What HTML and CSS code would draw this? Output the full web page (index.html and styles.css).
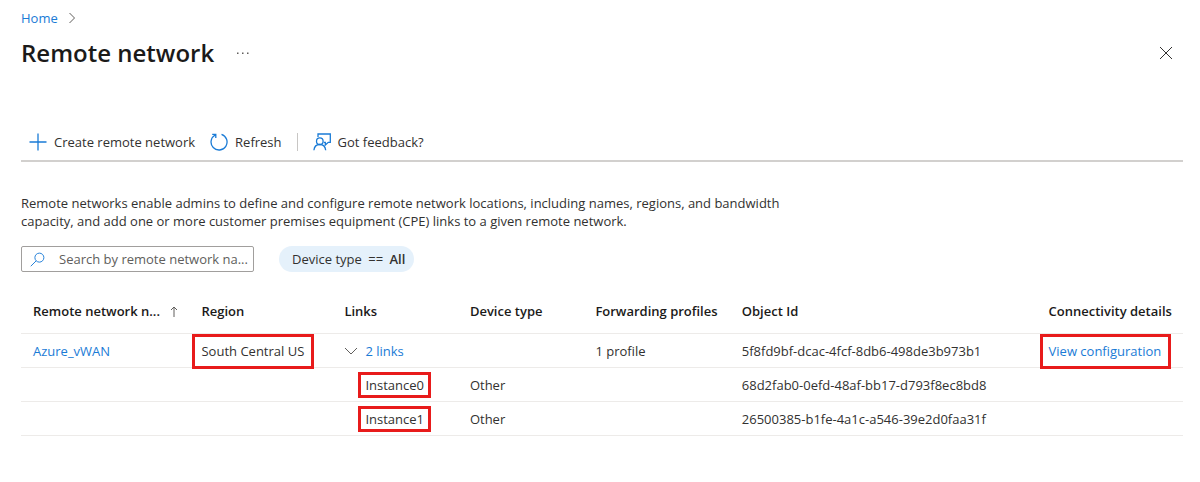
FILE: index.html
```html
<!DOCTYPE html>
<html lang="en">
<head>
<meta charset="utf-8">
<title>Remote network</title>
<link rel="stylesheet" href="styles.css">
</head>
<body>
<main class="page">
  <nav class="breadcrumb" aria-label="Breadcrumb">
    <a href="#">Home</a>
    <svg class="crumb-icon" viewBox="0 0 8 12" aria-hidden="true"><path d="M1.5 1 6.5 6l-5 5"/></svg>
  </nav>
  <header class="title-bar">
    <h1>Remote network</h1>
    <button class="icon-button more" type="button" aria-label="More">
      <svg viewBox="0 0 14 4" aria-hidden="true"><path d="M1 1.500h1.500v1.500H1zM6 1.500h1.500v1.500H6zM11 1.500h1.500v1.500H11z"/></svg>
    </button>
    <button class="icon-button close" type="button" aria-label="Close">
      <svg viewBox="0 0 14 14" aria-hidden="true"><path d="m1 1 12 12M13 1 1 13"/></svg>
    </button>
  </header>
  <div class="toolbar" role="toolbar">
    <button class="command" type="button">
      <svg viewBox="0 0 18 18" aria-hidden="true"><path d="M9 .5v17M.5 9h17"/></svg>
      Create remote network
    </button>
    <button class="command" type="button">
      <svg viewBox="0 0 18 18" aria-hidden="true"><path d="M11.500 1.400A8 8 0 1 1 5.200 2M2.200 1.300h3.600v3.600"/></svg>
      Refresh
    </button>
    <span class="divider"></span>
    <button class="command" type="button">
      <svg viewBox="0 0 18 18" aria-hidden="true"><path d="M5 4V1h12.300v8.300h-2L12.300 12V9.300h-1.500"/><circle cx="6.800" cy="8.200" r="3.300"/><path d="M.9 17.300c.4-3.600 2.600-5.800 5.900-5.800s5.500 2.200 5.900 5.800"/></svg>
      Got feedback?
    </button>
  </div>
  <p class="description">Remote networks enable admins to define and configure remote network locations, including names, regions, and bandwidth capacity, and add one or more customer premises equipment (CPE) links to a given remote network.</p>
  <div class="filters">
    <label class="search">
      <svg viewBox="0 0 16 16" aria-hidden="true"><circle cx="10" cy="6" r="4.800"/><path d="M6.500 9.500.8 15.200"/></svg>
      <input type="text" aria-label="Search by remote network name" placeholder="Search by remote network na...">
    </label>
    <button class="pill" type="button">Device type <span class="operator">==</span> <strong>All</strong></button>
  </div>
  <table class="networks">
    <colgroup>
      <col class="col-name"><col class="col-region"><col class="col-links"><col class="col-device"><col class="col-profiles"><col class="col-object"><col class="col-details">
    </colgroup>
    <thead>
      <tr>
        <th scope="col"><span class="sortable">Remote network n...<svg class="sort" viewBox="0 0 8 11" aria-hidden="true"><path d="M4 11V1M1 4l3-3 3 3"/></svg></span></th>
        <th scope="col">Region</th>
        <th scope="col">Links</th>
        <th scope="col">Device type</th>
        <th scope="col">Forwarding profiles</th>
        <th scope="col">Object Id</th>
        <th scope="col">Connectivity details</th>
      </tr>
    </thead>
    <tbody>
      <tr>
        <td><a href="#">Azure_vWAN</a></td>
        <td><span class="callout">South Central US</span></td>
        <td><span class="links"><svg class="chevron" viewBox="0 0 14 8" aria-hidden="true"><path d="m1 1 6 6 6-6"/></svg><a href="#">2 links</a></span></td>
        <td></td>
        <td>1 profile</td>
        <td>5f8fd9bf-dcac-4fcf-8db6-498de3b973b1</td>
        <td><a class="callout" href="#">View configuration</a></td>
      </tr>
      <tr>
        <td></td><td></td>
        <td class="nested"><span class="callout small">Instance0</span></td>
        <td>Other</td><td></td>
        <td>68d2fab0-0efd-48af-bb17-d793f8ec8bd8</td>
        <td></td>
      </tr>
      <tr>
        <td></td><td></td>
        <td class="nested"><span class="callout small">Instance1</span></td>
        <td>Other</td><td></td>
        <td>26500385-b1fe-4a1c-a546-39e2d0faa31f</td>
        <td></td>
      </tr>
    </tbody>
  </table>
</main>
</body>
</html>
```
FILE: styles.css
```css
* { box-sizing: border-box; }
body {
  margin: 0;
  background: #fff;
  color: #323130;
  font: 13px/18px "Open Sans", "Noto Sans", sans-serif;
}
button, input { font: inherit; color: inherit; }
button { padding: 0; border: 0; background: none; }
a { color: #1a7bd6; text-decoration: none; }
svg { display: block; flex: none; fill: none; stroke: #605e5c; }
.page { padding: 9px 17px 24px 21px; }
.breadcrumb { display: flex; align-items: center; gap: 10px; }
.crumb-icon { width: 8px; height: 12px; }
.title-bar { display: flex; align-items: center; margin-top: 9px; height: 34px; }
h1 { margin: 0; font-size: 24px; line-height: 34px; font-weight: 600; color: #1b1a19; }
.icon-button { display: flex; }
.more { margin-left: 22px; }
.more svg { width: 14px; height: 4px; fill: #605e5c; stroke: none; }
.close { margin-left: auto; margin-right: 10px; }
.close svg { width: 14px; height: 14px; stroke: #323130; }
.toolbar {
  display: flex;
  align-items: center;
  gap: 15px;
  height: 40px;
  margin-top: 52px;
  padding: 2px 8px 0;
  border-bottom: 2px solid #d2d0ce;
}
.command { display: flex; align-items: center; gap: 7px; }
.command svg { width: 18px; height: 18px; stroke: #1a7bd6; stroke-width: 1.3; }
.divider { width: 1px; height: 18px; background: #c8c6c4; }
.description { max-width: 760px; margin: 32px 0 0; }
.filters { display: flex; gap: 25px; margin-top: 16px; }
.search {
  display: flex;
  align-items: center;
  gap: 14px;
  width: 233px;
  height: 26px;
  padding: 0 1px 0 8px;
  border: 1px solid #a19f9d;
  border-radius: 2px;
}
.search svg { width: 15px; height: 15px; stroke: #1a7bd6; }
.search input { flex: 1; min-width: 0; padding: 0; border: 0; outline: 0; background: none; }
.search input::placeholder { color: #605e5c; opacity: 1; }
.pill { height: 26px; padding: 0 9px 0 13px; border-radius: 13px; background: #e5f1fb; }
.pill strong { font-weight: 600; }
.operator { margin: 0 3px; }
.networks { width: 100%; margin-top: 16px; table-layout: fixed; border-collapse: collapse; }
.col-name { width: 14.5%; }
.col-region { width: 12.3%; }
.col-links { width: 10.8%; }
.col-device { width: 10.8%; }
.col-profiles { width: 12.6%; }
.col-object { width: 26.4%; }
.col-details { width: 12.6%; }
th, td { padding: 2px 0 0 12px; text-align: left; white-space: nowrap; border-bottom: 1px solid #edebe9; }
th { height: 45px; font-weight: 600; color: #1b1a19; }
td { height: 34px; }
.sortable { display: flex; align-items: center; justify-content: space-between; padding-right: 11px; }
.sort { width: 8px; height: 11px; }
.links { display: flex; align-items: center; gap: 7px; }
.chevron { width: 14px; height: 8px; }
.callout {
  display: inline-block;
  margin: 0 -6px;
  padding: 0 7px 0 6px;
  line-height: 29px;
  outline: 3px solid #e81b1b;
}
.nested { padding-left: 33px; }
.small { margin: 0 -4px; padding: 0 4px; line-height: 20px; }
```
